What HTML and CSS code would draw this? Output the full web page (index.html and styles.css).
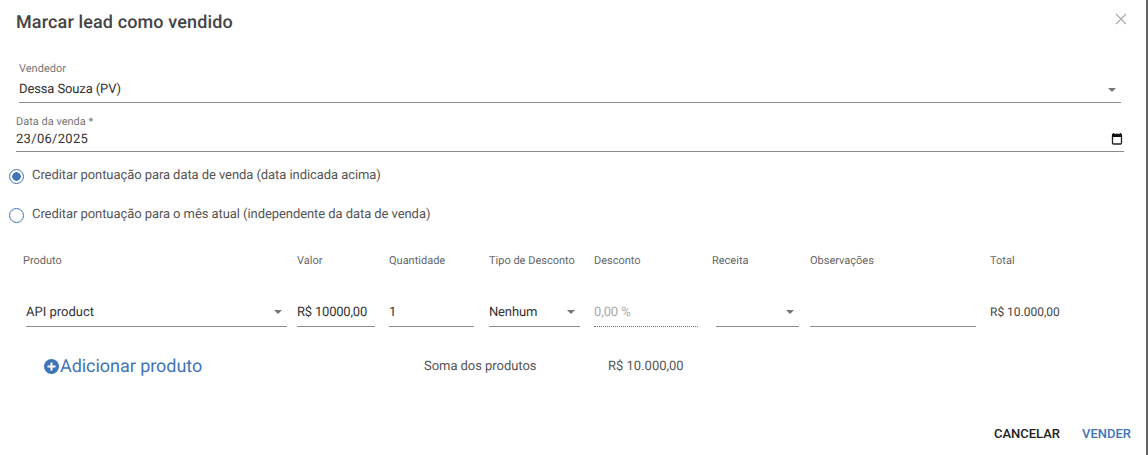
FILE: index.html
```html
<!DOCTYPE html>
<html lang="pt-BR">
<head>
<meta charset="utf-8">
<title>Marcar lead como vendido</title>
<link rel="stylesheet" href="styles.css">
</head>
<body>
<div class="dialog">
  <header class="head">
    <h1 class="title">Marcar lead como vendido</h1>
    <svg class="close" width="12" height="12" viewBox="0 0 12 12"><path d="M1 1l10 10M11 1L1 11" stroke="#aaa" stroke-width="1.2" fill="none"/></svg>
  </header>
  <div class="field seller">
    <span class="label">Vendedor</span>
    <div class="control"><span>Dessa Souza (PV)</span><span class="caret"></span></div>
  </div>
  <div class="field date">
    <span class="label">Data da venda *</span>
    <div class="control"><span class="date-value">23/06/2025</span>
      <svg class="cal" width="12" height="14" viewBox="0 0 12 14"><path d="M2.5 1v2M9.500 1v2" stroke="#111" stroke-width="1.300"/><rect x="1.500" y="2.500" width="9" height="9.500" rx="1" fill="none" stroke="#222" stroke-width="1.300"/><rect x="1" y="2" width="10" height="3" fill="#111"/></svg>
    </div>
  </div>
  <div class="radios">
    <label class="radio"><span class="dot on"></span>Creditar pontuação para data de venda (data indicada acima)</label>
    <label class="radio"><span class="dot"></span>Creditar pontuação para o mês atual (independente da data de venda)</label>
  </div>
  <div class="table">
    <span class="th">Produto</span><span class="th">Valor</span><span class="th">Quantidade</span><span class="th">Tipo de Desconto</span><span class="th">Desconto</span><span class="th">Receita</span><span class="th">Observações</span><span class="th">Total</span>
    <div class="cell c-prod"><span>API product</span><span class="caret"></span></div>
    <div class="cell c-val"><span>R$ 10000,00</span></div>
    <div class="cell c-qty"><span>1</span></div>
    <div class="cell c-type"><span>Nenhum</span><span class="caret"></span></div>
    <div class="cell c-disc"><span>0,00 %</span></div>
    <div class="cell c-rec"><span></span><span class="caret"></span></div>
    <div class="cell c-obs"><span></span></div>
    <div class="total">R$ 10.000,00</div>
  </div>
  <div class="sum-row">
    <a class="add"><svg class="plus" width="15" height="15" viewBox="0 0 15 15"><circle cx="7.500" cy="7.500" r="7.500" fill="#3f75b5"/><path d="M7.500 3.500v8M3.500 7.500h8" stroke="#fff" stroke-width="2"/></svg><span class="add-text">Adicionar produto</span></a>
    <span class="sum-label">Soma dos produtos</span>
    <span class="sum-value">R$ 10.000,00</span>
  </div>
  <footer class="actions">
    <button class="btn">CANCELAR</button>
    <button class="btn primary">VENDER</button>
  </footer>
</div>
</body>
</html>
```
FILE: styles.css
```css
* { box-sizing: border-box; }
html, body { margin: 0; padding: 0; height: 100%; overflow: hidden; background: #fff; }
body { font-family: Roboto, "Liberation Sans", sans-serif; color: #333; text-rendering: geometricPrecision; }
.dialog { width: 1146px; height: 455px; background: #fff; box-shadow: 2px 0 0 #616161; overflow: hidden; }
.head { display: flex; justify-content: space-between; align-items: center; height: 45px; padding: 0 21px 0 16px; }
.title { margin: 0; font-size: 18px; font-weight: 500; letter-spacing: .13px; color: #444; line-height: 45px; }
.close { margin-top: -7px; margin-right: -2px; }
.field { display: block; }
.label { display: block; font-size: 11px; line-height: 13px; color: #777; }
.control { display: flex; justify-content: space-between; align-items: center; font-size: 13px; letter-spacing: -.12px; color: #333; border-bottom: 1px solid #8c8c8c; }
.seller { margin: 17px 25px 0 19px; }
.seller .control { height: 28px; padding: 2px 5px 0 0; }
.date { margin: 12px 22px 0 16px; }
.date .control { height: 24px; padding: 0 1px 1px 0; }
.date-value { letter-spacing: .3px; }
.cal { display: block; }
.caret { width: 0; height: 0; border-left: 4px solid transparent; border-right: 4px solid transparent; border-top: 4px solid #777; }
.radios { display: flex; flex-direction: column; gap: 23px; margin: 16px 0 0 9px; }
.radio { display: flex; align-items: center; gap: 8px; font-size: 13px; letter-spacing: -.07px; line-height: 16px; color: #555; }
.dot { width: 15px; height: 15px; border-radius: 50%; border: 1.500px solid #3f75b5; background: #fff; }
.dot.on { background: radial-gradient(circle, #3f75b5 0 4px, #fff 4.500px); }
.table { display: grid; grid-template-columns: 274px 92px 100px 105px 118px 98px 180px 1fr; grid-template-rows: 13px 30px; row-gap: 30px; margin: 31px 0 0 23px; }
.th { font-size: 11px; line-height: 13px; color: #666; }
.cell { display: flex; justify-content: space-between; align-items: center; height: 30px; border-bottom: 1px solid #8c8c8c; font-size: 13px; color: #333; padding-top: 1px; }
.c-prod { margin-left: 3px; width: 261px; padding-right: 5px; }
.c-val { width: 78px; letter-spacing: -.2px; }
.c-qty { width: 85px; }
.c-type { width: 91px; padding-right: 5px; letter-spacing: -.15px; }
.c-disc { width: 104px; border-bottom: 1px dotted #777; color: #aaa; letter-spacing: -.1px; }
.c-rec { margin-left: 4px; width: 83px; padding-right: 5px; }
.c-obs { width: 166px; }
.total { font-size: 12px; line-height: 30px; color: #444; }
.sum-row { display: flex; align-items: center; height: 24px; margin: 27px 0 0 44px; }
.add { display: flex; align-items: center; gap: 1px; width: 380px; font-size: 18px; color: #3f75b5; }
.add-text { letter-spacing: -.05px; }
.plus { flex: none; }
.sum-label { width: 184px; font-size: 13px; letter-spacing: -.05px; color: #555; }
.sum-value { font-size: 13px; color: #555; }
.actions { display: flex; justify-content: flex-end; gap: 22px; padding-right: 15px; margin-top: 48px; }
.btn { border: 0; padding: 0; background: none; font: 500 13px/16px Roboto, "Liberation Sans", sans-serif; color: #222; }
.btn.primary { color: #3f75b5; }
```
